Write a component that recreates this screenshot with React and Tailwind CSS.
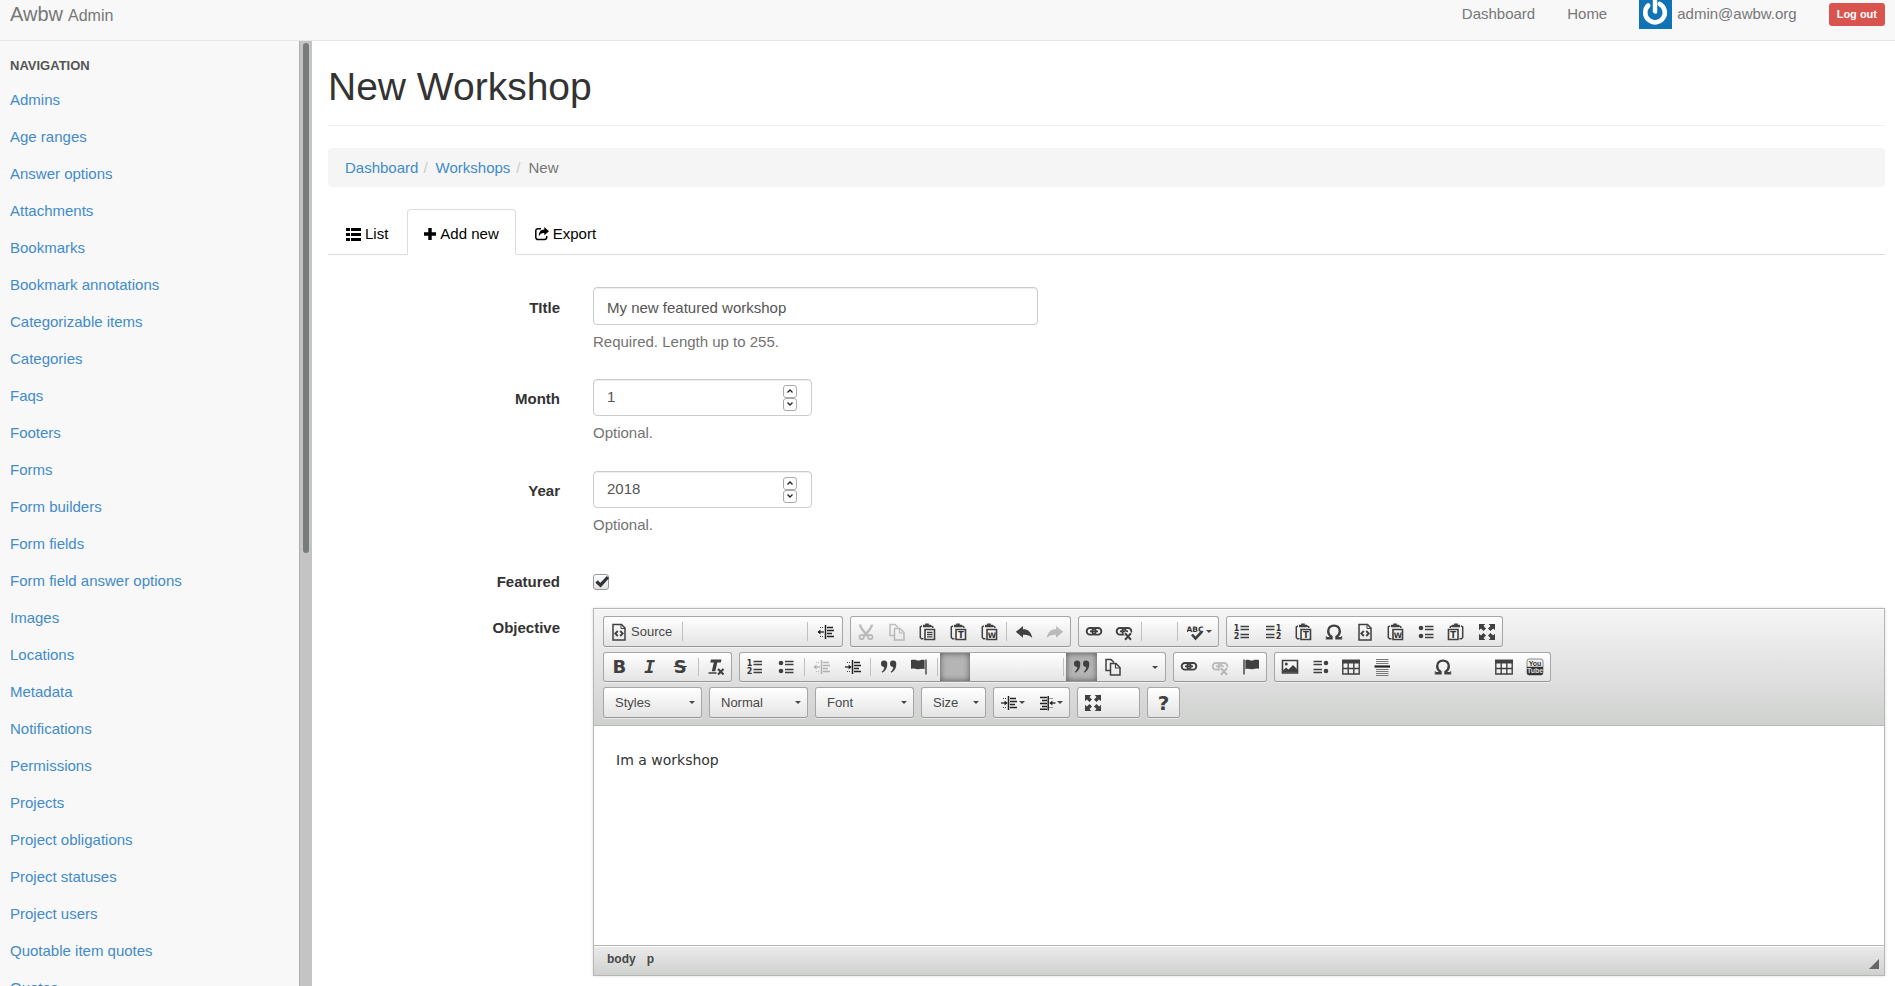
import React from "react";

const NAV_ITEMS = [
  "Admins", "Age ranges", "Answer options", "Attachments", "Bookmarks",
  "Bookmark annotations", "Categorizable items", "Categories", "Faqs", "Footers",
  "Forms", "Form builders", "Form fields", "Form field answer options", "Images",
  "Locations", "Metadata", "Notifications", "Permissions", "Projects",
  "Project obligations", "Project statuses", "Project users", "Quotable item quotes", "Quotes",
];

/* ---------- icons, all drawn on an 18 x 18 grid ---------- */

function Icon({ children, faded = false }) {
  return (
    <svg
      viewBox="0 0 18 18"
      className={faded ? "size-[18px] shrink-0 opacity-30" : "size-[18px] shrink-0"}
      fill="none"
      stroke="#404040"
      aria-hidden="true"
    >
      {children}
    </svg>
  );
}

function Glyph({ x, y, size, children }) {
  return (
    <text x={x} y={y} fontSize={size} fontWeight="bold" fontFamily="DejaVu Sans, sans-serif" textAnchor="middle" fill="#333" stroke="none">
      {children}
    </text>
  );
}

const SourceIcon = () => (
  <Icon>
    <path d="M3 1.5h8.5l3.500 3.500v12H3z" strokeWidth="1.500" />
    <path d="M11 1.500v4h4" strokeWidth="1" />
    <path d="M7.800 8L5.300 10.500l2.500 2.500M10.200 8l2.500 2.500-2.500 2.500" strokeWidth="1.800" />
  </Icon>
);

/* Text lines with a margin bar; the arrow points away from or toward the bar. */
const DirectionIcon = ({ flip = false, arrow = "left", faded }) => (
  <Icon faded={faded}>
    <g transform={flip ? "translate(18 0) scale(-1 1)" : undefined}>
      <path d="M8.500 2v14" strokeWidth="1.500" stroke="#222" />
      <path d="M10 4.500h6M10 7.500h7M10 10.500h5M10 13.500h7" strokeWidth="1.500" stroke="#222" />
      <path d="M3 4.500h4M3 13.500h4" strokeWidth="1" strokeDasharray="1 1" />
      <path d="M1 9h6" strokeWidth="1.300" stroke="#222" />
      {arrow === "left" ? (
        <path d="M.5 9l3-2.600v5.200z" fill="#222" stroke="none" />
      ) : (
        <path d="M7.600 9l-3-2.600v5.200z" fill="#222" stroke="none" />
      )}
    </g>
  </Icon>
);

const BlockRtlIcon = () => (
  <Icon>
    <path d="M2 3.500h7M4 6.500h5M2 9.500h7M4 12.500h5M2 15.300h7" strokeWidth="1.500" stroke="#222" />
    <path d="M10.200 2v14.500" strokeWidth="1.500" stroke="#222" />
    <path d="M11.500 4.500h4M11.500 13.500h4" strokeWidth="1" strokeDasharray="1 1" />
    <path d="M12 9h5.500" strokeWidth="1.300" stroke="#222" />
    <path d="M11.400 9l3-2.600v5.200z" fill="#222" stroke="none" />
  </Icon>
);

const CutIcon = () => (
  <Icon faded>
    <path d="M3 1.500c.2 3 2 5 6 9.500l2 2M15 1.500c-.2 3-2 5-6 9.500l-2 2" strokeWidth="2.500" />
    <circle cx="4.700" cy="14" r="2.200" strokeWidth="1.700" />
    <circle cx="13.300" cy="14" r="2.200" strokeWidth="1.700" />
  </Icon>
);

const CopyIcon = ({ faded }) => (
  <Icon faded={faded}>
    <path d="M6 12.500H2v-11h5l3 3" strokeWidth="1.500" />
    <path d="M6.500 5.500h5.500l4 4v7.500H6.500z" strokeWidth="1.500" />
    <path d="M11.500 5.500v4.500H16" strokeWidth="1.200" />
  </Icon>
);

const PasteIcon = ({ letter, flip = false }) => (
  <Icon>
    <g transform={flip ? "translate(18 0) scale(-1 1)" : undefined}>
      <path d="M4 2.800L2.300 4v10.500l1.200 1.200H5.500M13 2.800l1.800 1.200V5" strokeWidth="1.500" />
      <path d="M5 1.800h2.200V.5h3.600v1.300H13v2.400H5z" fill="#404040" stroke="none" />
      <path d="M7 6.500h9.500v10H7z" strokeWidth="1.600" fill="#f4f4f4" />
      {!letter && <path d="M9 9.500h5.500M9 11.700h5.500M9 13.900h5.500" strokeWidth="1.300" />}
    </g>
    {letter && <Glyph x={flip ? 6.200 : 11.800} y={14.700} size={letter === "W" ? 7.500 : 8.500}>{letter}</Glyph>}
  </Icon>
);

const UndoIcon = ({ redo = false }) => (
  <Icon faded={redo}>
    <path
      transform={redo ? "translate(18 0) scale(-1 1)" : undefined}
      d="M.8 8.800L8 3v3.200c5 0 8 2.300 9.300 8.800-2.500-2.800-5-3.400-9.300-3.300v3.100z"
      fill="#404040"
      stroke="none"
    />
  </Icon>
);

const LinkIcon = ({ broken = false, faded }) => (
  <Icon faded={faded}>
    <rect x="1.700" y="5" width="9" height="6.600" rx="3.200" strokeWidth="1.900" />
    <rect x="7.300" y="5" width="9" height="6.600" rx="3.200" strokeWidth="1.900" />
    <path d="M5 8.300h8" strokeWidth="1.700" />
    {broken && <path d="M9.500 9.500l7 7M16.500 9.500l-7 7" strokeWidth="3.600" stroke="#f4f4f4" />}
    {broken && <path d="M10 10.300l6 6.500M16 10.300l-6 6.500" strokeWidth="2" />}
  </Icon>
);

const SpellIcon = () => (
  <Icon>
    <Glyph x={8} y={8.500} size={7.500}>ABC</Glyph>
    <path d="M5 11.500l3.500 4L15 8.500" strokeWidth="2.600" />
  </Icon>
);

const NumberedIcon = ({ flip = false }) => (
  <Icon>
    <Glyph x={flip ? 14.500 : 3.500} y={8} size={8}>1</Glyph>
    <Glyph x={flip ? 14.500 : 3.500} y={16} size={8}>2</Glyph>
    <path d={flip ? "M2 3.500h8.500M2 6.500h8.500M2 11.500h8.500M2 14.500h8.500" : "M7.500 3.500H16M7.500 6.500H16M7.500 11.500H16M7.500 14.500H16"} strokeWidth="1.500" />
  </Icon>
);

const BulletIcon = ({ flip = false }) => (
  <Icon>
    <g transform={flip ? "translate(18 0) scale(-1 1)" : undefined}>
      <circle cx="4" cy="5" r="2.300" fill="#404040" stroke="none" />
      <circle cx="4" cy="13" r="2.300" fill="#404040" stroke="none" />
      <path d="M8 3.500h8.500M8 6.500h8.500M8 11.500h8.500M8 14.500h8.500" strokeWidth="1.500" />
    </g>
  </Icon>
);

const OmegaIcon = () => (
  <Icon>
    <path d="M1.800 15.300h4.700v-1.600C4.300 12.500 3.200 10.500 3.200 8.300 3.200 4.900 5.500 2.600 9 2.600s5.800 2.300 5.800 5.700c0 2.200-1.100 4.200-3.300 5.400v1.600h4.700" strokeWidth="2.400" />
    <path d="M1.300 16.500v-3.300M16.700 16.500v-3.300" strokeWidth="1" />
  </Icon>
);

const MaximizeIcon = () => (
  <Icon>
    <path d="M1 1h6.300L5.500 2.900 8 5.500 5.500 8 2.900 5.400 1 7.200zM17 1v6.200l-1.900-1.800L12.500 8 10 5.500l2.500-2.600L10.700 1zM1 17v-6.200l1.900 1.800L5.500 10 8 12.500l-2.500 2.600L7.300 17zM17 17h-6.300l1.800-1.900-2.500-2.600 2.500-2.500 2.600 2.600 1.900-1.800z" fill="#404040" stroke="none" />
  </Icon>
);

const QuoteIcon = () => (
  <Icon>
    <path d="M1 6a3 3 0 0 1 6.300-.5C7.500 9.500 5.700 13 2.500 14.700l-.8-.9C3.500 12.500 4.300 10.700 4.200 9 2.500 9 1 7.800 1 6zM10 6a3 3 0 0 1 6.300-.5c.2 4-1.600 7.500-4.800 9.200l-.8-.9c1.800-1.300 2.600-3.100 2.500-4.800C11.500 9 10 7.800 10 6z" fill="#404040" stroke="none" />
  </Icon>
);

const FlagIcon = ({ flip = false }) => (
  <Icon>
    <g transform={flip ? "translate(18 0) scale(-1 1)" : undefined}>
      <path d="M2 1.500v15" strokeWidth="1.400" />
      <path d="M3.400 2.300c3-1.600 5 1 8 0 1.500-.5 3-.6 5.600-.3v8.800c-2.500-.5-4-.3-5.500.2-2.500.8-5-1.200-8.100.2z" fill="#404040" stroke="none" />
    </g>
  </Icon>
);

const RemoveFormatIcon = () => (
  <Icon>
    <path d="M4 1.500h10.500l-.7 3H10.300l-2 8.700H4.800l2-8.700H3.300z" fill="#404040" stroke="none" />
    <path d="M1.500 15h8" strokeWidth="1.500" />
    <path d="M11 11l5.500 5.500M16.500 11L11 16.500" strokeWidth="2.100" />
  </Icon>
);

const ImageIcon = () => (
  <Icon>
    <path d="M1.500 2.500h15v12.500h-15z" strokeWidth="1.600" />
    <path d="M2 12.500l3-3 2.500 2L12 7l4 4v3.500H2z" fill="#404040" stroke="none" />
    <circle cx="5.300" cy="6" r="1.500" fill="#404040" stroke="none" />
  </Icon>
);

const TableIcon = () => (
  <Icon>
    <path d="M.8 2.500h16.400v13.500H.8zM6.200 5v11M11.800 5v11M1 10.500h16" strokeWidth="1.400" />
    <path d="M0 1.700h18v3.800H0z" fill="#404040" stroke="none" />
  </Icon>
);

const RuleIcon = () => (
  <Icon>
    <path d="M3 1.500h12.500M3 3.500h12.500M3 5.500h12.500M3 11.500h12.500M3 13.500h12.500M3 15.500h12.500M3 17.500h12.500" strokeWidth="1" stroke="#777" />
    <path d="M1.500 8.500h15.500" strokeWidth="2.200" stroke="#222" />
  </Icon>
);

const YoutubeIcon = () => (
  <Icon>
    <rect x="1" y="1" width="16" height="16" rx="2" fill="#eeeeee" stroke="#8a8a8a" />
    <path d="M1 8.700h16V15a2 2 0 0 1-2 2H3a2 2 0 0 1-2-2z" fill="#333" stroke="none" />
    <text x="9" y="7.700" fontSize="7" fontWeight="bold" fontFamily="Liberation Sans, sans-serif" textAnchor="middle" fill="#333" stroke="none">You</text>
    <text x="9" y="15.300" fontSize="7" fontWeight="bold" fontFamily="Liberation Sans, sans-serif" textAnchor="middle" fill="#ddd" stroke="none">Tube</text>
  </Icon>
);

const Caret = () => (
  <svg viewBox="0 0 6 3" className="h-[3px] w-[6px] shrink-0" aria-hidden="true">
    <path d="M0 0h6L3 3z" fill="#474747" />
  </svg>
);

/* ---------- toolbar parts ---------- */

function Group({ className, children }) {
  return (
    <div className={`flex items-stretch rounded-[3px] border border-[#a6a6a6] border-b-[#979797] bg-linear-to-b from-white to-[#e4e4e4] shadow-[0_1px_0_rgba(255,255,255,.5),0_0_2px_rgba(255,255,255,.15)_inset] ${className}`}>
      {children}
    </div>
  );
}

function Tool({ label, pressed = false, children }) {
  return (
    <button
      type="button"
      aria-label={label}
      aria-pressed={pressed || undefined}
      className={`flex min-w-0 flex-1 items-center justify-center gap-px ${pressed ? "bg-[#b5b5b5] shadow-[0_0_6px_rgba(0,0,0,.55)_inset]" : ""}`}
    >
      {children}
    </button>
  );
}

const Divider = () => <span className="mx-[2px] my-[5px] w-px shrink-0 bg-[#c0c0c0]" />;

function Picker({ label, options, className }) {
  return (
    <div className={`relative ${className}`}>
      <select
        aria-label={label}
        className="h-[31px] w-full appearance-none rounded-[3px] border border-[#a6a6a6] border-b-[#979797] bg-linear-to-b from-white to-[#e4e4e4] pl-[11px] text-[13px] text-[#474747] shadow-[0_1px_0_rgba(255,255,255,.5)]"
      >
        {options.map((o) => <option key={o}>{o}</option>)}
      </select>
      <span className="pointer-events-none absolute inset-y-0 right-[7px] flex items-center"><Caret /></span>
    </div>
  );
}

function Toolbar() {
  return (
    <div className="flex h-[117px] flex-col gap-[5px] border-b border-[#b6b6b6] bg-linear-to-b from-[#f5f5f5] to-[#cfd1cf] px-[9px] pt-[7px] shadow-[0_1px_0_#fff_inset]">
      <div className="flex h-[31px] items-stretch gap-[7px]">
        <Group className="w-[240px]">
          <button type="button" className="flex w-[76px] items-center gap-[3px] pl-[6px] text-[13px] text-[#474747]">
            <SourceIcon />Source
          </button>
          <Divider />
          <span className="flex-1" />
          <Divider />
          <div className="flex w-[32px]"><Tool label="Indent block"><DirectionIcon /></Tool></div>
        </Group>
        <Group className="w-[221px]">
          <Tool label="Cut"><CutIcon /></Tool>
          <Tool label="Copy"><CopyIcon faded /></Tool>
          <Tool label="Paste"><PasteIcon /></Tool>
          <Tool label="Paste as text"><PasteIcon letter="T" /></Tool>
          <Tool label="Paste from Word"><PasteIcon letter="W" /></Tool>
          <Divider />
          <Tool label="Undo"><UndoIcon /></Tool>
          <Tool label="Redo"><UndoIcon redo /></Tool>
        </Group>
        <Group className="w-[141px]">
          <Tool label="Link"><LinkIcon /></Tool>
          <Tool label="Unlink"><LinkIcon broken /></Tool>
          <Divider />
          <span className="w-[31px]" />
          <Divider />
          <div className="flex w-[38px]"><Tool label="Spell check"><SpellIcon /><Caret /></Tool></div>
        </Group>
        <Group className="w-[277px]">
          <Tool label="Numbered"><NumberedIcon /></Tool>
          <Tool label="Numbered, right to left"><NumberedIcon flip /></Tool>
          <Tool label="Paste text"><PasteIcon letter="T" /></Tool>
          <Tool label="Symbol"><OmegaIcon /></Tool>
          <Tool label="View source"><SourceIcon /></Tool>
          <Tool label="Paste Word"><PasteIcon letter="W" /></Tool>
          <Tool label="Bulleted"><BulletIcon /></Tool>
          <Tool label="Paste text, right to left"><PasteIcon letter="T" flip /></Tool>
          <Tool label="Full screen"><MaximizeIcon /></Tool>
        </Group>
      </div>

      <div className="flex h-[30px] items-stretch gap-[7px]">
        <Group className="w-[129px] text-[#404040]">
          <Tool label="Bold"><span className="font-['DejaVu_Sans'] text-[18px] leading-none font-bold">B</span></Tool>
          <Tool label="Italic"><span className="font-['DejaVu_Sans_Mono'] text-[18px] leading-none font-bold italic">I</span></Tool>
          <Tool label="Strikethrough"><span className="font-['DejaVu_Sans'] text-[18px] leading-none font-bold line-through">S</span></Tool>
          <Divider />
          <Tool label="Remove format"><RemoveFormatIcon /></Tool>
        </Group>
        <Group className="w-[427px]">
          <Tool label="Numbered list"><NumberedIcon /></Tool>
          <Tool label="Bulleted list"><BulletIcon /></Tool>
          <Divider />
          <Tool label="Decrease indent"><DirectionIcon faded /></Tool>
          <Tool label="Increase indent"><DirectionIcon arrow="right" /></Tool>
          <Divider />
          <Tool label="Block quote"><QuoteIcon /></Tool>
          <Tool label="Container"><FlagIcon flip /></Tool>
          <Divider />
          <Tool label="Align left" pressed />
          <span className="w-[91px]" />
          <Divider />
          <Tool label="Quote" pressed><QuoteIcon /></Tool>
          <Tool label="Templates"><CopyIcon /></Tool>
          <span className="flex w-[37px] items-center justify-end pr-[7px]"><Caret /></span>
        </Group>
        <Group className="w-[94px]">
          <Tool label="Insert link"><LinkIcon /></Tool>
          <Tool label="Remove link"><LinkIcon broken faded /></Tool>
          <Tool label="Anchor"><FlagIcon /></Tool>
        </Group>
        <Group className="w-[277px]">
          <Tool label="Image"><ImageIcon /></Tool>
          <Tool label="List, right to left"><BulletIcon flip /></Tool>
          <Tool label="Table"><TableIcon /></Tool>
          <Tool label="Horizontal line"><RuleIcon /></Tool>
          <span className="flex-1" />
          <Tool label="Special character"><OmegaIcon /></Tool>
          <span className="flex-1" />
          <Tool label="Insert table"><TableIcon /></Tool>
          <Tool label="YouTube"><YoutubeIcon /></Tool>
        </Group>
      </div>

      <div className="flex h-[31px] items-stretch gap-[7px]">
        <Picker label="Styles" options={["Styles"]} className="w-[99px]" />
        <Picker label="Paragraph format" options={["Normal"]} className="w-[99px]" />
        <Picker label="Font" options={["Font"]} className="w-[99px]" />
        <Picker label="Size" options={["Size"]} className="w-[65px]" />
        <Group className="w-[77px]">
          <Tool label="Left to right"><DirectionIcon arrow="right" /><Caret /></Tool>
          <Tool label="Right to left"><BlockRtlIcon /><Caret /></Tool>
        </Group>
        <Group className="w-[63px]">
          <Tool label="Maximize"><MaximizeIcon /></Tool>
          <span className="flex-1" />
        </Group>
        <Group className="w-[33px] text-[#404040]">
          <Tool label="About"><span className="font-['DejaVu_Sans'] text-[20px] leading-none font-bold">?</span></Tool>
        </Group>
      </div>
    </div>
  );
}

/* ---------- form ---------- */

function Row({ label, htmlFor, className, labelClass, children }) {
  return (
    <div className={`flex ${className}`}>
      <div className="w-[265px] shrink-0 pr-[33px] text-right">
        <label htmlFor={htmlFor} className={`block font-bold text-[#333] ${labelClass}`}>{label}</label>
      </div>
      <div className="min-w-0 flex-1">{children}</div>
    </div>
  );
}

const FIELD = "rounded-[4px] border border-[#ccc] bg-white text-[#555] shadow-[inset_0_1px_1px_rgba(0,0,0,.075)]";

function NumberField({ id, value }) {
  return (
    <div className={`flex h-[37px] w-[219px] items-center pr-[14px] pl-[13px] ${FIELD}`}>
      <input
        id={id}
        type="number"
        defaultValue={value}
        className="w-0 min-w-0 flex-1 bg-transparent outline-none [appearance:textfield] [&::-webkit-inner-spin-button]:appearance-none"
      />
      <div className="flex flex-col">
        <button type="button" aria-label="Increase" className="flex h-[13px] w-[14px] items-center justify-center rounded-[3px] border border-[#aaa]">
          <svg viewBox="0 0 6 4" className="h-[4px] w-[6px]" fill="none" stroke="#222" strokeWidth="1.3"><path d="M.5 3.500L3 1l2.500 2.500" /></svg>
        </button>
        <button type="button" aria-label="Decrease" className="flex h-[13px] w-[14px] items-start justify-center rounded-[3px] border border-[#aaa] pt-[3px]">
          <svg viewBox="0 0 6 4" className="h-[4px] w-[6px]" fill="none" stroke="#222" strokeWidth="1.3"><path d="M.5.5L3 3 5.500.5" /></svg>
        </button>
      </div>
    </div>
  );
}

const Help = ({ children }) => <p className="mt-[6px] leading-[22px] text-[#737373]">{children}</p>;

export default function App() {
  return (
    <div className="flex h-screen flex-col overflow-hidden bg-white font-['Liberation_Sans',Arial,sans-serif] text-[15px] text-[#333]">
      <header className="flex h-[41px] shrink-0 items-start justify-between border-b border-[#e7e7e7] bg-[#f8f8f8] pr-[10px] pl-[10px] text-[#777]">
        <a href="#" className="flex h-[28px] items-baseline gap-[5px] text-[20px] leading-[28px]">
          Awbw <small className="text-[16px]">Admin</small>
        </a>
        <nav className="flex h-[29px] items-center gap-[32px]">
          <a href="#">Dashboard</a>
          <a href="#">Home</a>
          <a href="#" className="flex items-center gap-[5px]">
            <svg viewBox="0 0 33 29" className="h-[29px] w-[33px]" aria-hidden="true">
              <path d="M0 0h33v29H0z" fill="#0f73b6" />
              <path d="M9.200 5.500a9.800 9.800 0 1 0 11.500-1.600" fill="none" stroke="#fff" strokeWidth="4.600" strokeLinecap="round" />
              <path d="M13.800 0h4.400v12.300a1.800 1.800 0 0 1-2.600 1.200l-1.800-1.200z" fill="#fff" />
            </svg>
            admin@awbw.org
          </a>
          <a href="#" className="flex h-[23px] items-center rounded-[3px] bg-[#d9534f] px-[8px] text-[11px] font-bold text-white">Log out</a>
        </nav>
      </header>

      <div className="flex min-h-0 flex-1">
        <aside className="flex w-[312px] shrink-0 bg-[#f8f8f8]">
          <nav className="min-w-0 flex-1 overflow-hidden pl-[10px]">
            <h2 className="pt-[13px] text-[13px] leading-[23px] font-bold text-[#555]">NAVIGATION</h2>
            <ul className="pt-[4px]">
              {NAV_ITEMS.map((item) => (
                <li key={item}><a href="#" className="block leading-[37px] text-[#428bca]">{item}</a></li>
              ))}
            </ul>
          </nav>
          <div className="w-[13px] border-l border-[#aeaeae] bg-[#c3c4c3] pt-[2px] pl-[3px]">
            <div className="h-[510px] w-[6px] rounded-[3px] bg-[#777b7b]" />
          </div>
        </aside>

        <main className="min-w-0 flex-1 overflow-hidden pr-[10px] pl-[16px]">
          <h1 className="border-b border-[#eee] pt-[24px] pb-[16px] text-[39px] leading-[44px]">New Workshop</h1>

          <ol className="mt-[22px] flex h-[39px] items-center rounded-[4px] bg-[#f5f5f5] px-[17px] pt-[2px]">
            <li><a href="#" className="text-[#428bca]">Dashboard</a></li>
            <li className="flex"><span className="pr-[8px] pl-[5px] text-[#ccc]">/</span><a href="#" className="text-[#428bca]">Workshops</a></li>
            <li className="flex text-[#777]"><span className="pr-[8px] pl-[6px] text-[#ccc]">/</span>New</li>
          </ol>

          <nav className="mt-[22px] flex h-[46px] gap-[2px] border-b border-[#ddd] text-black">
            <a href="#" className="flex h-[46px] items-center gap-[4px] border border-transparent px-[16px] pt-[4px] pl-[17px]">
              <svg viewBox="0 0 15 13" className="h-[13px] w-[15px]" aria-hidden="true">
                <path d="M0 0h4v3H0zM5 0h10v3H5zM0 5h4v3H0zM5 5h10v3H5zM0 10h4v3H0zM5 10h10v3H5z" />
              </svg>
              List
            </a>
            <a href="#" className="flex h-[46px] items-center gap-[4px] rounded-t-[4px] border border-[#ddd] border-b-white bg-white px-[16px] pt-[4px]">
              <svg viewBox="0 0 12 12" className="size-[12px]" aria-hidden="true"><path d="M4.300 0h3.400v4.300H12v3.400H7.700V12H4.300V7.700H0V4.300h4.300z" /></svg>
              Add new
            </a>
            <a href="#" className="flex h-[46px] items-center gap-[4px] border border-transparent px-[16px] pt-[4px]">
              <svg viewBox="0 0 14 14" className="size-[14px]" aria-hidden="true">
                <path d="M6 1.700H3a2.200 2.200 0 0 0-2.200 2.200v6.400A2.200 2.200 0 0 0 3 12.500h6.500a2.200 2.200 0 0 0 2.200-2.200V9" fill="none" stroke="#000" strokeWidth="1.500" />
                <path d="M9.300 0L14 4.200 9.300 8.300V5.900C6.500 5.800 5 6.800 3.800 9.500 3.700 5 5.500 2.500 9.300 2.400z" />
              </svg>
              Export
            </a>
          </nav>

          <form className="pt-[32px]">
            <Row label="TItle" htmlFor="title" className="h-[92px]" labelClass="leading-[42px]">
              <input id="title" type="text" defaultValue="My new featured workshop" className={`block h-[38px] w-[445px] px-[13px] pt-[2px] ${FIELD}`} />
              <Help>Required. Length up to 255.</Help>
            </Row>
            <Row label="Month" htmlFor="month" className="h-[92px]" labelClass="leading-[40px]">
              <NumberField id="month" value="1" />
              <Help>Optional.</Help>
            </Row>
            <Row label="Year" htmlFor="year" className="h-[92px]" labelClass="leading-[40px]">
              <NumberField id="year" value="2018" />
              <Help>Optional.</Help>
            </Row>
            <Row label="Featured" htmlFor="featured" className="h-[45px] pt-[11px]" labelClass="leading-[16px]">
              <span className="grid size-[16px]">
                <input id="featured" type="checkbox" defaultChecked className="col-start-1 row-start-1 size-[16px] appearance-none rounded-[3px] border border-[#999] bg-linear-to-b from-white to-[#e2e2e2]" />
                <svg viewBox="0 0 16 16" className="pointer-events-none col-start-1 row-start-1 size-[16px]" aria-hidden="true">
                  <path d="M3.500 7.500l4 3.700L15 3" fill="none" stroke="#2e3436" strokeWidth="3.200" />
                </svg>
              </span>
            </Row>
            <Row label="Objective" htmlFor="objective" labelClass="leading-[40px]" className="">
              <div className="border border-[#b6b6b6] shadow-[0_0_3px_rgba(0,0,0,.15)]">
                <Toolbar />
                <textarea
                  id="objective"
                  defaultValue="Im a workshop"
                  className="block h-[219px] w-full resize-none bg-white px-[22px] py-[24px] font-['DejaVu_Sans',sans-serif] text-[14px] leading-[20px] text-[#333] outline-none"
                />
                <div className="flex h-[30px] items-center justify-between border-t border-[#b6b6b6] bg-linear-to-b from-[#ebebeb] to-[#cfd1cf] pr-[5px] pl-[13px] text-[12px] font-bold text-[#484848] shadow-[0_1px_0_#fff_inset]">
                  <span className="flex gap-[11px] pb-[4px]"><a href="#">body</a><a href="#">p</a></span>
                  <svg viewBox="0 0 10 10" className="mt-[7px] size-[10px]" aria-hidden="true"><path d="M10 0v10H0z" fill="#666" /></svg>
                </div>
              </div>
            </Row>
          </form>
        </main>
      </div>
    </div>
  );
}
